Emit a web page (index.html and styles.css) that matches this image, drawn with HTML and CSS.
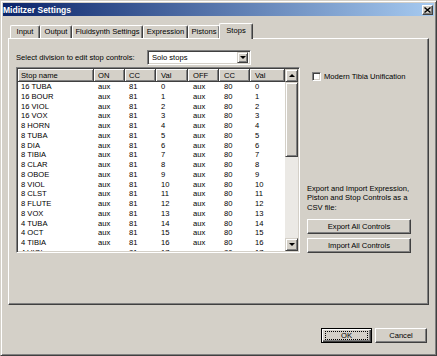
FILE: index.html
```html
<!DOCTYPE html>
<html lang="en">
<head>
    <meta charset="UTF-8">
    <title>Miditzer Settings</title>
    <link rel="stylesheet" href="styles.css">
</head>
<body>
    <div class="window">
        <div class="titlebar">
            <span>Miditzer Settings</span>
            <span class="close-btn">
                <svg width="7" height="6" viewBox="0 0 7 6"><path d="M0.5 0.5 L6.5 5.5 M6.5 0.5 L0.5 5.5" stroke="#000" stroke-width="1.4"/></svg>
            </span>
        </div>

        <div class="dialog-body">
            <div class="tabs">
                <div class="tab tab-input">Input</div>
                <div class="tab tab-output">Output</div>
                <div class="tab tab-fluid">Fluidsynth Settings</div>
                <div class="tab tab-expr">Expression</div>
                <div class="tab tab-pistons">Pistons</div>
                <div class="tab tab-stops active">Stops</div>
            </div>

            <div class="panel">
                <div class="division-row">
                    <span class="division-label">Select division to edit stop controls:</span>
                    <div class="combo">
                        <span class="combo-text">Solo stops</span>
                        <span class="combo-arrow"><i class="tri-down"></i></span>
                    </div>
                </div>

                <div class="listview">
                    <div class="list-main">
                        <div class="list-head">
                            <span>Stop name</span><span>ON</span><span>CC</span><span>Val</span><span>OFF</span><span>CC</span><span>Val</span>
                        </div>
                        <div class="list-rows" id="stopRows">
                            <!-- rows are filled in by the script below -->
                        </div>
                    </div>
                    <div class="scrollbar">
                        <span class="sb-btn"><i class="tri-up"></i></span>
                        <span class="sb-thumb"></span>
                        <span class="sb-track"></span>
                        <span class="sb-btn"><i class="tri-down"></i></span>
                    </div>
                </div>

                <div class="side">
                    <label class="check-row">
                        <span class="checkbox"></span>
                        <span>Modern Tibia Unification</span>
                    </label>
                    <div class="export-group">
                        <p class="export-text">Export and Import Expression,<br>Piston and Stop Controls as a<br>CSV file:</p>
                        <button class="btn btn-wide">Export All Controls</button>
                        <button class="btn btn-wide">Import All Controls</button>
                    </div>
                </div>
            </div>

            <div class="footer">
                <button class="btn btn-ok">OK</button>
                <button class="btn btn-cancel">Cancel</button>
            </div>
        </div>
    </div>

    <script>
        const stops = [
            "16 TUBA", "16 BOUR", "16 VIOL", "16 VOX", "8 HORN", "8 TUBA", "8 DIA", "8 TIBIA", "8 CLAR",
            "8 OBOE", "8 VIOL", "8 CLST", "8 FLUTE", "8 VOX", "4 TUBA", "4 OCT", "4 TIBIA", "4 VIOL"
        ];

        const stopRows = document.getElementById("stopRows");
        stops.forEach(function(name, i) {
            let row = document.createElement("div");
            row.className = "list-row";
            [name, "aux", "81", i, "aux", "80", i].forEach(function(value) {
                let cell = document.createElement("span");
                cell.innerText = value;
                row.appendChild(cell);
            });
            stopRows.appendChild(row);
        });
    </script>
</body>
</html>
```

FILE: styles.css
```css
* {
    box-sizing: border-box;
}

body {
    margin: 0;
    width: 437px;
    height: 356px;
    overflow: hidden;
    background: #d4d0c8;
    color: #000;
    font-family: "Liberation Sans", Arial, sans-serif;
    font-size: 7.6px;
}

.window {
    width: 437px;
    height: 356px;
    border: 1px solid;
    border-color: #d4d0c8 #404040 #404040 #d4d0c8;
    box-shadow: inset 1px 1px #fff, inset -1px -1px #808080;
    padding: 2px;
    display: flex;
    flex-direction: column;
}

.titlebar {
    height: 13px;
    background: linear-gradient(to right, #0a246a, #a6caf0);
    color: #fff;
    font-weight: bold;
    font-size: 8.5px;
    display: flex;
    align-items: center;
    justify-content: space-between;
    padding: 0 1px 0 0;
}

.close-btn {
    width: 11px;
    height: 10px;
    background: #d4d0c8;
    border: 1px solid;
    border-color: #fff #404040 #404040 #fff;
    box-shadow: inset -1px -1px #808080;
    display: flex;
    align-items: center;
    justify-content: center;
}

.close-btn svg {
    display: block;
}

.dialog-body {
    flex: 1;
    padding: 0 5px;
    display: flex;
    flex-direction: column;
}

/* tab strip */
.tabs {
    display: flex;
    align-items: flex-end;
    height: 15px;
    margin-top: 7px;
    padding-left: 2px;
}

.tab {
    height: 13px;
    display: flex;
    align-items: center;
    justify-content: center;
    border: 1px solid;
    border-bottom: none;
    border-color: #fff #404040 #404040 #fff;
    box-shadow: inset -1px 0 #808080;
    border-radius: 2px 2px 0 0;
    padding-bottom: 1px;
}

.tab-input { width: 30px; }
.tab-output { width: 32px; }
.tab-fluid { width: 71px; }
.tab-expr { width: 45px; }
.tab-pistons { width: 32px; }
.tab-stops { width: 34px; }

.tab.active {
    height: 16px;
    margin: 0 -1px -1px -1px;
    padding-bottom: 3px;
    background: #d4d0c8;
    position: relative;
    z-index: 1;
}

.panel {
    height: 267px;
    border: 1px solid;
    border-color: #fff #404040 #404040 #fff;
    box-shadow: inset -1px -1px #808080;
    padding: 11px 0 0 7px;
    display: grid;
    grid-template-columns: 284px 104px;
    grid-template-rows: 15px 186px;
    column-gap: 7px;
    row-gap: 2px;
}

.division-row {
    grid-column: 1;
    display: flex;
    align-items: center;
}

.division-label {
    width: 131px;
}

.combo {
    width: 104px;
    height: 15px;
    background: #fff;
    border: 1px solid;
    border-color: #808080 #fff #fff #808080;
    box-shadow: inset 1px 1px #404040, inset -1px -1px #d4d0c8;
    display: flex;
    align-items: center;
    padding: 2px;
}

.combo-text {
    flex: 1;
    padding-left: 2px;
}

.combo-arrow, .sb-btn {
    width: 11px;
    height: 11px;
    background: #d4d0c8;
    border: 1px solid;
    border-color: #d4d0c8 #404040 #404040 #d4d0c8;
    box-shadow: inset 1px 1px #fff, inset -1px -1px #808080;
    display: flex;
    align-items: center;
    justify-content: center;
}

.tri-down, .tri-up {
    width: 0;
    height: 0;
    border-left: 3px solid transparent;
    border-right: 3px solid transparent;
}

.tri-down {
    border-top: 3px solid #000;
}

.tri-up {
    border-bottom: 3px solid #000;
}

/* stop list */
.listview {
    grid-column: 1;
    border: 1px solid;
    border-color: #808080 #fff #fff #808080;
    box-shadow: inset 1px 1px #404040, inset -1px -1px #d4d0c8;
    background: #fff;
    padding: 1px;
    display: flex;
    overflow: hidden;
}

.list-main {
    flex: 1;
    overflow: hidden;
}

.list-head, .list-row {
    display: grid;
    grid-template-columns: 76px 31px 31px 32px 31px 31px 1fr;
}

.list-head {
    height: 13px;
}

.list-head span {
    background: #d4d0c8;
    border-right: 1px solid #404040;
    border-bottom: 1px solid #404040;
    box-shadow: inset 1px 1px #fff, inset -1px -1px #808080;
    display: flex;
    align-items: center;
    padding-left: 4px;
}

.list-row {
    height: 9.75px;
    line-height: 9.75px;
    white-space: nowrap;
}

.list-row span {
    padding-left: 4px;
}

.list-head span:nth-child(1), .list-row span:nth-child(1) {
    padding-left: 3px;
}

.list-head span:nth-child(n+4), .list-row span:nth-child(n+4) {
    padding-left: 5px;
}

.scrollbar {
    width: 13px;
    display: flex;
    flex-direction: column;
}

.scrollbar .sb-btn {
    width: 13px;
    height: 13px;
}

.sb-thumb {
    height: 75px;
    background: #d4d0c8;
    border: 1px solid;
    border-color: #d4d0c8 #404040 #404040 #d4d0c8;
    box-shadow: inset 1px 1px #fff, inset -1px -1px #808080;
}

.sb-track {
    flex: 1;
    background: #ebe9e5;
}

/* right column */
.side {
    display: flex;
    flex-direction: column;
    justify-content: space-between;
}

.check-row {
    display: flex;
    align-items: center;
    gap: 3px;
    margin-top: 5px;
    padding-left: 5px;
}

.checkbox {
    width: 9px;
    height: 9px;
    background: #fff;
    border: 1px solid;
    border-color: #808080 #fff #fff #808080;
    box-shadow: inset 1px 1px #404040, inset -1px -1px #d4d0c8;
}

.export-text {
    margin: 0 0 7px 0;
    line-height: 9.5px;
}

.btn {
    display: block;
    height: 15px;
    padding: 0;
    font: inherit;
    color: #000;
    background: #d4d0c8;
    border: 1px solid;
    border-color: #fff #404040 #404040 #fff;
    box-shadow: inset -1px -1px #808080;
}

.btn-wide {
    width: 104px;
    margin-top: 4px;
}

.btn-wide:first-of-type {
    margin-top: 0;
}

.footer {
    display: flex;
    justify-content: flex-end;
    gap: 3px;
    margin-top: 23px;
    padding-right: 2px;
}

.btn-ok {
    width: 51px;
    position: relative;
    border-color: #000;
    box-shadow: inset 1px 1px #fff, inset -1px -1px #404040, inset -2px -2px #808080;
}

.btn-ok::after {
    content: "";
    position: absolute;
    top: 2px;
    left: 3px;
    right: 3px;
    bottom: 2px;
    border: 1px dotted #000;
}

.btn-cancel {
    width: 52px;
}
```
